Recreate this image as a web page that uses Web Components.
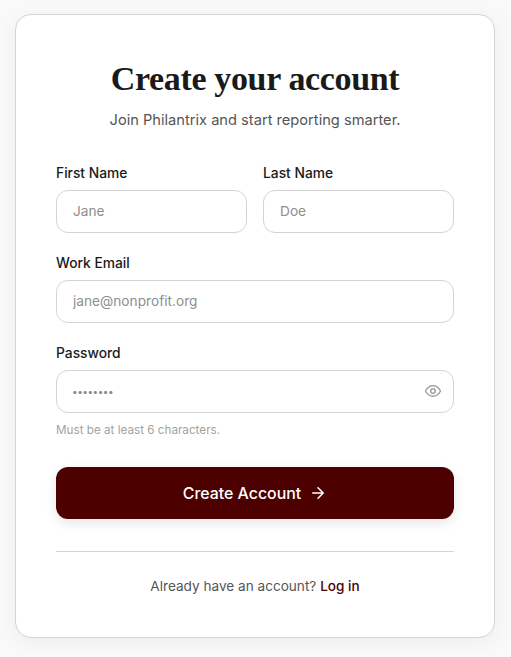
<!DOCTYPE html>
<html lang="en">
<head>
<meta charset="utf-8">
<title>Create your account</title>
<style>
   html, body { margin: 0; height: 100%; }
   body {
      background: #f9f9f9;
      font-family: "Inter", "Liberation Sans", sans-serif;
      color: #1a1a1a;
   }
</style>
</head>
<body>

<signup-card>
   <h-title slot="title">Create your account</h-title>
   <span slot="subtitle">Join Philantrix and start reporting smarter.</span>

   <field-row>
      <form-field label="First Name" placeholder="Jane"></form-field>
      <form-field label="Last Name" placeholder="Doe"></form-field>
   </field-row>
   <form-field label="Work Email" placeholder="jane@nonprofit.org" type="email"></form-field>
   <form-field label="Password" type="password" value="password" hint="Must be at least 6 characters."></form-field>
   <primary-button>Create Account</primary-button>

   <span slot="footer">Already have an account? <a href="#">Log in</a></span>
</signup-card>

<script>
class SignupCard extends HTMLElement {
   constructor() {
      super();
      this.attachShadow({ mode: "open" });
      this.shadowRoot.innerHTML = `
         <style>
            :host {
               display: block;
               box-sizing: border-box;
               width: 480px;
               margin: 14px 0 0 15px;
               padding: 40px 40px 39px;
               background: #fff;
               border: 1px solid #d4d4d4;
               border-radius: 16px;
               box-shadow: 0 4px 20px rgba(0, 0, 0, .05);
            }
            header { text-align: center; margin-bottom: 31px; }
            h1 {
               margin: 0 0 5px;
               font: 700 34px/48px "Liberation Serif", serif;
               letter-spacing: -.35px;
               color: #1a1a1a;
            }
            p {
               margin: 0;
               font-size: 14.65px;
               line-height: 24px;
               color: #555;
            }
            form { display: flex; flex-direction: column; gap: 20px; }
            hr { border: 0; border-top: 1px solid #d4d4d4; margin: 32px 0 22px; }
            footer {
               text-align: center;
               font-size: 13.6px;
               line-height: 24px;
               color: #555;
            }
            ::slotted([slot="footer"]) { display: block; }
         </style>
         <header>
            <h1><slot name="title"></slot></h1>
            <p><slot name="subtitle"></slot></p>
         </header>
         <form><slot></slot></form>
         <hr>
         <footer><slot name="footer"></slot></footer>
      `;
   }
}

class FieldRow extends HTMLElement {
   constructor() {
      super();
      this.attachShadow({ mode: "open" });
      this.shadowRoot.innerHTML = `
         <style>
            :host { display: grid; grid-template-columns: 1fr 1fr; gap: 16px; }
         </style>
         <slot></slot>
      `;
   }
}

class HTitle extends HTMLElement {
   constructor() {
      super();
      this.attachShadow({ mode: "open" });
      this.shadowRoot.innerHTML = `<style>:host { display: inline; }</style><slot></slot>`;
   }
}

class FormField extends HTMLElement {
   constructor() {
      super();
      this.attachShadow({ mode: "open" });
      const type = this.getAttribute("type") || "text";
      const hint = this.getAttribute("hint");
      this.shadowRoot.innerHTML = `
         <style>
            :host { display: block; min-width: 0; }
            label {
               display: block;
               margin-bottom: 6px;
               font-size: 13.8px;
               line-height: 21px;
               font-weight: 500;
               color: #1a1a1a;
            }
            .box { position: relative; }
            input {
               display: block;
               box-sizing: border-box;
               width: 100%;
               height: 43px;
               padding: 0 48px 1px 16px;
               border: 1px solid #d4d4d4;
               border-radius: 12px;
               background: #fff;
               font: 400 13.7px "Inter", "Liberation Sans", sans-serif;
               color: #8a8a8a;
               outline: none;
            }
            input::placeholder { color: #8f8f8f; opacity: 1; }
            input[type=password] { font-size: 10px; letter-spacing: -.5px; padding-left: 15px; }
            button {
               position: absolute;
               top: 12px;
               right: 12px;
               width: 18px;
               height: 18px;
               padding: 0;
               border: 0;
               background: none;
               color: #a3a3a3;
            }
            svg { display: block; }
            small {
               display: block;
               margin-top: 9px;
               font-size: 11.7px;
               line-height: 17px;
               color: #a3a3a3;
            }
         </style>
         <label></label>
         <div class="box">
            <input type="${type}">
            ${type == "password" ? `<button type="button" aria-label="Show password">
               <svg viewBox="0 0 24 24" width="18" height="18" fill="none" stroke="currentColor" stroke-width="2" stroke-linecap="round" stroke-linejoin="round">
                  <path d="M2 12s3.6-7 10-7 10 7 10 7-3.6 7-10 7-10-7-10-7Z"/>
                  <circle cx="12" cy="12" r="3"/>
               </svg>
            </button>` : ""}
         </div>
         ${hint ? `<small></small>` : ""}
      `;
      this.shadowRoot.querySelector("label").textContent = this.getAttribute("label");
      const input = this.shadowRoot.querySelector("input");
      input.placeholder = this.getAttribute("placeholder") || "";
      input.value = this.getAttribute("value") || "";
      if (hint) this.shadowRoot.querySelector("small").textContent = hint;
   }
}

class PrimaryButton extends HTMLElement {
   constructor() {
      super();
      this.attachShadow({ mode: "open" });
      this.shadowRoot.innerHTML = `
         <style>
            :host { display: block; margin-top: 8px; }
            button {
               display: flex;
               align-items: center;
               justify-content: center;
               gap: 8px;
               box-sizing: border-box;
               width: 100%;
               height: 52px;
               border: 0;
               border-radius: 12px;
               background: #4d0000;
               color: #fff;
               font: 500 15.9px "Inter", "Liberation Sans", sans-serif;
               box-shadow: 0 4px 12px rgba(0, 0, 0, .1);
            }
            svg { display: block; }
         </style>
         <button type="button">
            <slot></slot>
            <svg viewBox="0 0 24 24" width="18" height="18" fill="none" stroke="currentColor" stroke-width="2" stroke-linecap="round" stroke-linejoin="round">
               <path d="M5 12h14M12 5l7 7-7 7"/>
            </svg>
         </button>
      `;
   }
}

customElements.define("signup-card", SignupCard);
customElements.define("field-row", FieldRow);
customElements.define("h-title", HTitle);
customElements.define("form-field", FormField);
customElements.define("primary-button", PrimaryButton);
</script>
<style>
   signup-card a { color: #4d0000; text-decoration: none; font-weight: 500; }
</style>
</body>
</html>
